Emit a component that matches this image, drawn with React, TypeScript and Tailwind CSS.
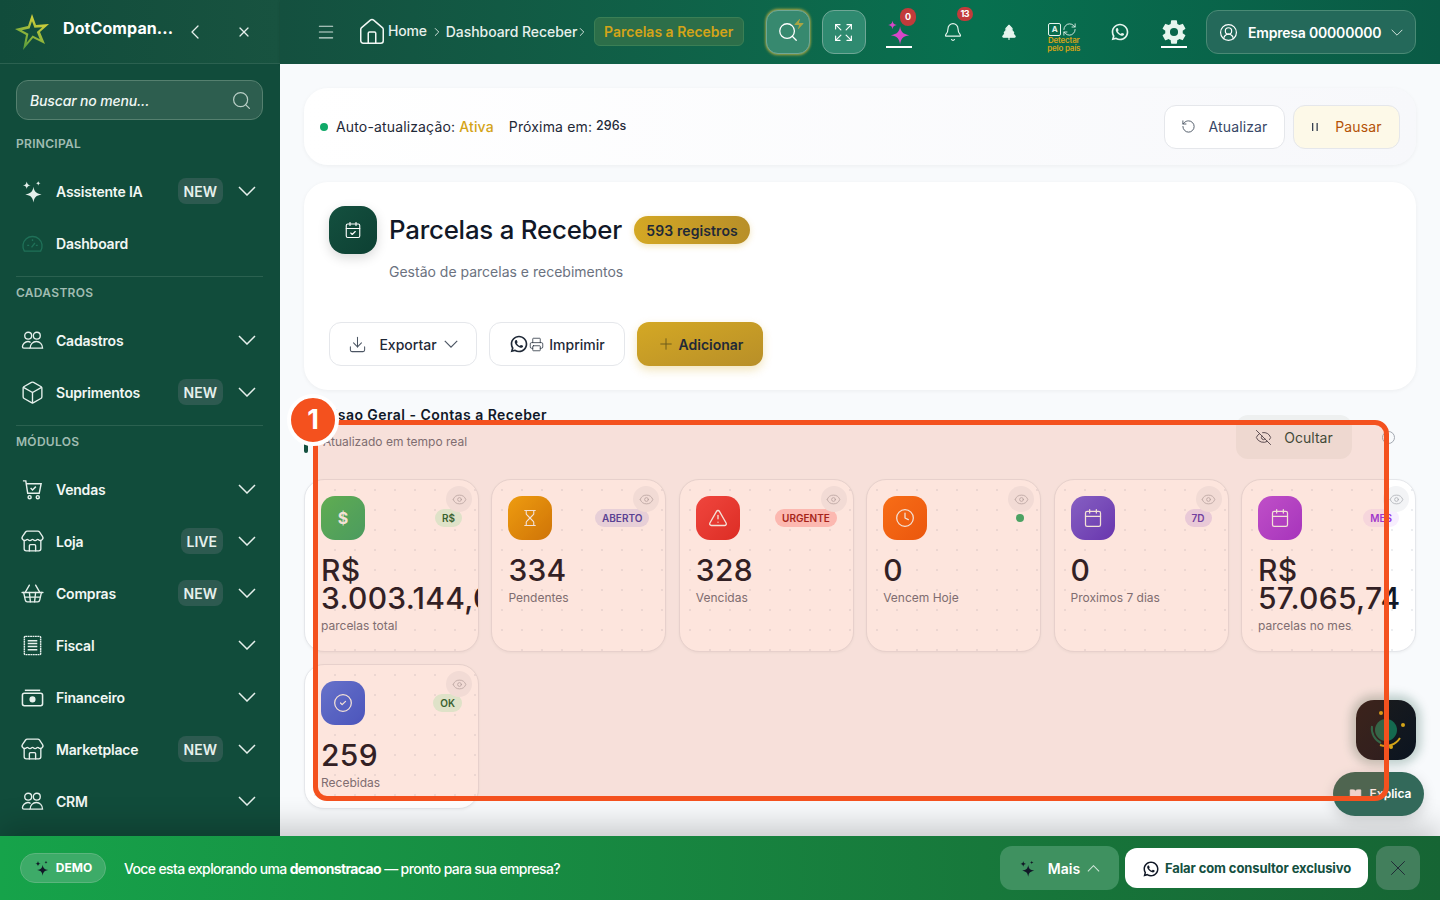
import {
  Bell,
  BookOpen,
  Box,
  Calendar,
  CalendarCheck,
  ChevronLeft,
  ChevronRight,
  CircleCheck,
  CircleUserRound,
  Clock,
  Download,
  Expand,
  Eye,
  EyeOff,
  Hourglass,
  House,
  Menu,
  Plus,
  Printer,
  RefreshCw,
  RotateCw,
  Search,
  ShoppingBasket,
  Store,
  TreePine,
  TriangleAlert,
  X,
  Zap,
} from 'lucide-react';
import { IoSettingsSharp } from 'react-icons/io5';
import { RiWhatsappLine } from 'react-icons/ri';
import { clsx } from 'clsx';
import type { ReactNode } from 'react';

function Chevron({ className, up }: { className?: string; up?: boolean }) {
  return (
    <svg viewBox="0 0 18 10" fill="none" stroke="currentColor" strokeWidth="1.5" className={clsx('shrink-0', className)}>
      <path d={up ? 'M1 9l8-8 8 8' : 'M1 1l8 8 8-8'} />
    </svg>
  );
}

function SparkleIcon({ className }: { className?: string }) {
  return (
    <svg viewBox="0 0 24 24" fill="currentColor" className={clsx('shrink-0', className)}>
      <path d="M13 7c.8 5 2.6 7 8.5 8-5.9 1-7.7 3-8.5 8.500-.8-5.500-2.600-7.500-8.500-8.500 5.900-1 7.700-3 8.500-8z" />
      <path d="M6 1.500c.4 2.600 1.300 3.600 4 4-2.700.4-3.600 1.400-4 4-.4-2.600-1.300-3.600-4-4 2.700-.4 3.600-1.400 4-4z" />
      <path d="M18 1c.3 1.500.8 2.100 2.500 2.500-1.700.4-2.200 1-2.500 2.500-.3-1.500-.8-2.100-2.500-2.500C17.200 3.100 17.700 2.500 18 1z" />
    </svg>
  );
}

function PeopleIcon({ className }: { className?: string }) {
  return (
    <svg viewBox="0 0 24 24" fill="none" stroke="currentColor" strokeWidth="1.4" className={clsx('shrink-0', className)}>
      <circle cx="7.500" cy="7" r="3.600" />
      <circle cx="16.500" cy="7" r="3.600" />
      <path d="M9.500 20h13c0-4-2.800-7-6.500-7s-6.500 3-6.500 7z" />
      <path d="M10 14c-.8-.6-1.600-1-2.700-1-3.200 0-5.800 3-5.800 5.500 0 1 .6 1.500 1.500 1.500h6.500" />
    </svg>
  );
}

function GaugeDome({ className }: { className?: string }) {
  return (
    <svg viewBox="0 0 24 24" fill="none" stroke="currentColor" strokeWidth="1.4" className={clsx('shrink-0', className)}>
      <path d="M3.500 20a10 10 0 1 1 17 0z" />
      <path d="M12 7.500v2M6.500 14h2M15.500 14h2M11 16l3.500-4.500" />
    </svg>
  );
}

function CartCheck({ className }: { className?: string }) {
  return (
    <svg viewBox="0 0 24 24" fill="none" stroke="currentColor" strokeWidth="1.5" className={clsx('shrink-0', className)}>
      <path d="M2 3h3l2 13h12l2-10H5.600" />
      <path d="M10 10.500l2 2 3.500-3.500" />
      <circle cx="9" cy="20" r="1.600" />
      <circle cx="17.500" cy="20" r="1.600" />
    </svg>
  );
}

function FiscalIcon({ className }: { className?: string }) {
  return (
    <svg viewBox="0 0 24 24" fill="none" stroke="currentColor" strokeWidth="1.5" className={clsx('shrink-0', className)}>
      <rect x="3.500" y="2.500" width="17" height="19" rx="1" strokeDasharray="2 0.500" />
      <path d="M7 7h10M7 10h10M7 13h10M7 16.500h10" />
    </svg>
  );
}

function MoneyIcon({ className }: { className?: string }) {
  return (
    <svg viewBox="0 0 24 24" fill="none" stroke="currentColor" strokeWidth="1.6" className={clsx('shrink-0', className)}>
      <path d="M4 4.500h16" />
      <rect x="1.500" y="7.500" width="21" height="13" rx="2" />
      <circle cx="12" cy="14" r="2.400" fill="currentColor" />
    </svg>
  );
}

function LogoStar() {
  return (
    <svg viewBox="0 0 36 36" className="w-[36px] h-[36px] shrink-0">
      <defs>
        <linearGradient id="logoStar" x1="0.8" y1="0" x2="0.2" y2="1">
          <stop offset="0" stopColor="#e8d93a" />
          <stop offset="1" stopColor="#4f9a3c" />
        </linearGradient>
      </defs>
      <path
        fillRule="evenodd"
        fill="url(#logoStar)"
        d="M17 0L21 11L34 10L25 18L30 30L18 24L8 36L11 21L0 15L13 12ZM17 7.200L14.600 14.400L6.800 16.200L13.400 19.800L11.600 28.800L17.600 21.600L24.800 25.200L21.800 18L27.200 13.200L19.400 13.800Z"
      />
    </svg>
  );
}

function MenuRow({
  icon,
  label,
  badge,
  chevron = true,
}: {
  icon: ReactNode;
  label: string;
  badge?: string;
  chevron?: boolean;
}) {
  return (
    <div className="h-[52px] flex items-center pl-[5px] pr-[7px] text-[#f1f7f4]">
      <span className="w-[22px] h-[22px] flex items-center justify-center shrink-0 text-[#e6f0ec]">{icon}</span>
      <span className="ml-[13px] text-[14px] font-semibold tracking-[-0.2px] flex-1">{label}</span>
      {badge && (
        <span className="h-[26px] px-[6px] flex items-center rounded-lg bg-[#2d5a50] text-[14px] font-semibold text-[#e6f0ec]">
          {badge}
        </span>
      )}
      {chevron && <Chevron className="w-[18px] h-[10px] ml-[15px] text-[#e6f0ec]" />}
    </div>
  );
}

function SectionLabel({ children, className }: { children: ReactNode; className: string }) {
  return <div className={clsx('text-[12px] leading-4 font-semibold tracking-[0.3px] text-[#a0bcb2]', className)}>{children}</div>;
}

function Sidebar() {
  const icon = 'w-[23px] h-[23px] shrink-0';
  return (
    <aside className="w-[280px] shrink-0 h-full bg-[#114c3b] overflow-hidden">
      <div className="h-[64px] flex items-center pl-[15px] pr-[28px] border-b border-[#2b6150] bg-gradient-to-r from-[#114c3b] to-[#185340]">
        <LogoStar />
        <span className="ml-[12px] -mt-[8px] text-[16px] font-bold tracking-[0.1px] text-white flex-1">DotCompan...</span>
        <ChevronLeft className="w-[24px] h-[24px] text-[#e6f0ec] mr-[29px]" strokeWidth={1.3} />
        <X className="w-[16px] h-[16px] text-[#e6f0ec]" strokeWidth={1.8} />
      </div>
      <div className="pl-[16px] pr-[17px] pt-[16px]">
        <div className="h-[40px] mb-[16px] flex items-center justify-between pl-[13px] pr-[10px] rounded-xl border border-[#55806f] bg-[#2d5e4f]">
          <span className="text-[14px] italic font-medium tracking-[-0.15px] text-[#f1f7f4]">Buscar no menu...</span>
          <Search className="w-[21px] h-[21px] text-[#b9cfc6]" strokeWidth={1.4} />
        </div>
        <SectionLabel className="mb-[13px]">PRINCIPAL</SectionLabel>
        <MenuRow icon={<SparkleIcon className={icon} />} label="Assistente IA" badge="NEW" />
        <MenuRow icon={<GaugeDome className={clsx(icon, 'text-[#1f7058]')} />} label="Dashboard" chevron={false} />
        <div className="mt-[7px] mb-[8px] h-px bg-[#2b6150]" />
        <SectionLabel className="mb-[13px]">CADASTROS</SectionLabel>
        <MenuRow icon={<PeopleIcon className={icon} />} label="Cadastros" />
        <MenuRow icon={<Box className="w-[25px] h-[25px] shrink-0" strokeWidth={1.3} />} label="Suprimentos" badge="NEW" />
        <div className="mt-[7px] mb-[8px] h-px bg-[#2b6150]" />
        <SectionLabel className="mb-[13px]">MÓDULOS</SectionLabel>
        <MenuRow icon={<CartCheck className={icon} />} label="Vendas" />
        <MenuRow icon={<Store className="w-[25px] h-[25px] shrink-0" strokeWidth={1.3} />} label="Loja" badge="LIVE" />
        <MenuRow icon={<ShoppingBasket className="w-[25px] h-[25px] shrink-0" strokeWidth={1.3} />} label="Compras" badge="NEW" />
        <MenuRow icon={<FiscalIcon className={icon} />} label="Fiscal" />
        <MenuRow icon={<MoneyIcon className={icon} />} label="Financeiro" />
        <MenuRow icon={<Store className="w-[25px] h-[25px] shrink-0" strokeWidth={1.3} />} label="Marketplace" badge="NEW" />
        <MenuRow icon={<PeopleIcon className={icon} />} label="CRM" />
      </div>
    </aside>
  );
}

function CountDot({ value, className }: { value: string; className: string }) {
  return (
    <span
      className={clsx(
        'absolute flex items-center justify-center rounded-full bg-[#c23b3b] text-white text-[9px] font-bold tracking-[-0.5px]',
        className,
      )}
    >
      {value}
    </span>
  );
}

function TopIcon({ children, underline, className }: { children: ReactNode; underline?: boolean; className?: string }) {
  return (
    <div className={clsx('relative shrink-0 w-[26px] h-[44px] flex items-center justify-center text-[#e6f5ee]', className)}>
      {children}
      {underline && <span className="absolute left-0 right-0 top-[36px] h-[2px] bg-white" />}
    </div>
  );
}

function Topbar() {
  return (
    <header className="h-[64px] shrink-0 flex items-center pl-[36px] bg-gradient-to-r from-[#14503f] via-[#07704f] via-60% to-[#0a5a45] shadow-sm">
      <Menu className="w-[20px] h-[20px] shrink-0 text-[#cfe0d9]" strokeWidth={1.3} />
      <House className="w-[30px] h-[30px] shrink-0 ml-[21px] text-[#f1f7f4]" strokeWidth={1.2} />
      <span className="ml-[1px] -mt-[4px] whitespace-nowrap text-[14px] font-medium tracking-[-0.2px] text-[#e6f0ec]">Home</span>
      <ChevronRight className="w-[14px] h-[14px] shrink-0 ml-[3px] text-[#e6f0ec]" strokeWidth={1.5} />
      <span className="ml-[2px] -mt-[2px] w-[132px] shrink-0 whitespace-nowrap text-[14px] font-medium tracking-[-0.05px] text-[#e6f0ec]">Dashboard Receber</span>
      <ChevronRight className="w-[14px] h-[14px] shrink-0 -ml-[3px] text-[#e6f0ec]" strokeWidth={1.5} />
      <span className="ml-[5px] h-[29px] w-[150px] shrink-0 -mt-[2px] flex items-center justify-center rounded-md border border-[#3b7f55] bg-[#2c6e49] text-[14px] font-semibold whitespace-nowrap text-[#d4a418]">
        Parcelas a Receber
      </span>
      <div className="ml-[22px] relative shrink-0 w-[44px] h-[44px] flex items-center justify-center rounded-xl border border-[#6fa796] bg-[#37896f] shadow-[0_-1px_3px_#a8a545,0_1px_3px_#a8a545]">
        <Search className="w-[22px] h-[22px] text-white" strokeWidth={1.4} />
        <Zap className="absolute top-[7px] right-[4px] w-[12px] h-[12px] text-[#a8a545]" fill="currentColor" strokeWidth={0} />
      </div>
      <div className="ml-[12px] shrink-0 w-[44px] h-[44px] flex items-center justify-center rounded-xl border border-[#6fa796] bg-[#2f8a70]">
        <Expand className="w-[21px] h-[21px] text-white" strokeWidth={1.3} />
      </div>
      <TopIcon underline className="ml-[20px]">
        <SparkleIcon className="w-[26px] h-[26px] text-[#d946c8]" />
        <CountDot value="0" className="left-[14px] top-[-2px] w-[16px] h-[18px]" />
      </TopIcon>
      <TopIcon className="ml-[28px]">
        <Bell className="w-[20px] h-[20px]" strokeWidth={1.4} />
        <CountDot value="13" className="left-[17px] top-[-3px] w-[16px] h-[14px]" />
      </TopIcon>
      <TopIcon className="ml-[30px]">
        <TreePine className="w-[18px] h-[18px]" fill="currentColor" strokeWidth={1.5} />
      </TopIcon>
      <div className="relative shrink-0 ml-[23px] w-[36px] h-[44px] flex items-center justify-center gap-[1px] text-[#e6f5ee]">
        <span className="-mt-[6px] w-[13px] h-[13px] flex items-center justify-center rounded-[2px] border border-current text-[8px] font-bold">A</span>
        <RefreshCw className="-mt-[6px] w-[15px] h-[15px] shrink-0" strokeWidth={1.4} />
        <span className="absolute left-[-2px] top-[26px] w-[42px] text-center text-[8px] leading-[8px] font-semibold tracking-[-0.2px] text-[#d4a418]">
          Detectar pelo país
        </span>
      </div>
      <TopIcon className="ml-[26px]">
        <RiWhatsappLine className="w-[20px] h-[20px]" />
      </TopIcon>
      <TopIcon underline className="ml-[28px]">
        <IoSettingsSharp className="w-[28px] h-[28px]" />
      </TopIcon>
      <div className="ml-auto mr-[24px] shrink-0 w-[210px] h-[44px] flex items-center justify-between px-[12px] rounded-xl border border-[#4a8a75] bg-[#24695a] text-white">
        <span className="flex items-center gap-[10px]">
          <CircleUserRound className="w-[19px] h-[19px]" strokeWidth={1.5} />
          <span className="text-[14px] font-semibold tracking-[-0.2px] whitespace-nowrap">Empresa 00000000</span>
        </span>
        <Chevron className="w-[12px] h-[7px] text-[#cfe0d9]" />
      </div>
    </header>
  );
}

const cards = [
  { icon: <span className="text-[16px] font-bold">$</span>, tone: 'from-[#46bd5b] to-[#2fa86b]', tag: 'R$', tagClass: 'bg-[#dcfce7] text-[#166534]', value: 'R$ 3.003.144,00', label: 'parcelas total' },
  { icon: <Hourglass className="w-[18px] h-[18px]" strokeWidth={1.5} />, tone: 'from-[#eeaa0e] to-[#c97a05]', tag: 'ABERTO', tagClass: 'bg-[#e6e6f8] text-[#3f3fa8]', value: '334', label: 'Pendentes' },
  { icon: <TriangleAlert className="w-[20px] h-[20px]" strokeWidth={1.6} />, tone: 'from-[#f04444] to-[#d92626]', tag: 'URGENTE', tagClass: 'bg-[#fecaca] text-[#991b1b]', value: '328', label: 'Vencidas' },
  { icon: <Clock className="w-[20px] h-[20px]" strokeWidth={1.5} />, tone: 'from-[#f97316] to-[#ea580c]', dot: true, value: '0', label: 'Vencem Hoje' },
  { icon: <Calendar className="w-[20px] h-[20px]" strokeWidth={1.5} />, tone: 'from-[#7462e0] to-[#5230c8]', tag: '7D', tagClass: 'bg-[#e8def8] text-[#5b3db5]', value: '0', label: 'Proximos 7 dias' },
  { icon: <Calendar className="w-[20px] h-[20px]" strokeWidth={1.5} />, tone: 'from-[#b74fe6] to-[#9a2fd8]', tag: 'MES', tagClass: 'bg-[#f7eefe] text-[#9333ea]', value: 'R$ 57.065,74', label: 'parcelas no mes' },
  { icon: <CircleCheck className="w-[20px] h-[20px]" strokeWidth={1.5} />, tone: 'from-[#4f78e8] to-[#2f55d8]', tag: 'OK', tagClass: 'bg-[#dcfce7] text-[#166534]', value: '259', label: 'Recebidas' },
];

function StatCard({ card }: { card: (typeof cards)[number] }) {
  return (
    <div className="relative overflow-hidden rounded-[20px] border border-[#e5e7eb] bg-white bg-[radial-gradient(circle,#eceef1_1px,transparent_1px)] bg-[size:20px_20px] p-[16px] shadow-[0_1px_3px_rgba(0,0,0,0.05)]">
      <span className="absolute top-[6px] right-[6px] w-[26px] h-[26px] flex items-center justify-center rounded-full bg-[#f3f4f6] text-[#a8abb2]">
        <Eye className="w-[15px] h-[15px]" strokeWidth={1.2} />
      </span>
      <div className="flex items-center justify-between">
        <span className={clsx('w-[44px] h-[44px] flex items-center justify-center rounded-[14px] bg-gradient-to-br text-[#f4fbf7]', card.tone)}>
          {card.icon}
        </span>
        {card.tag && (
          <span className={clsx('h-[18px] px-[7px] flex items-center rounded-full text-[10px] font-semibold', card.tagClass)}>{card.tag}</span>
        )}
        {card.dot && <span className="w-[8px] h-[8px] rounded-full bg-[#2fb170]" />}
      </div>
      <div className="mt-[16px] text-[30px] leading-[28px] font-medium tracking-[0.3px] text-[#111827]">{card.value}</div>
      <div className="mt-[5px] text-[12px] leading-[18px] text-[#6b7280]">{card.label}</div>
    </div>
  );
}

function Content() {
  return (
    <div className="flex-1 overflow-hidden px-[24px] pt-[24px] bg-[#f8fafc]">
      <div className="h-[77px] flex items-center justify-between pl-[16px] pr-[16px] rounded-3xl bg-gradient-to-r from-white to-[#f7f8fb] shadow-[0_1px_4px_rgba(0,0,0,0.05)] text-[14px] tracking-[0.15px] text-[#1f2937]">
        <div className="flex items-center">
          <span className="w-[8px] h-[8px] rounded-full bg-[#10a968]" />
          <span className="ml-[8px]">
            Auto-atualização: <span className="font-medium text-[#d4a418]">Ativa</span>
          </span>
          <span className="ml-[15px]">Próxima em:</span>
          <span className="ml-[4px] text-[12.500px] font-medium tracking-[0px]">296s</span>
        </div>
        <div className="flex items-center gap-[8px]">
          <button className="w-[121px] h-[44px] flex items-center justify-center gap-[12px] rounded-xl border border-[#e5e7eb] bg-white text-[#374766]">
            <RotateCw className="w-[15px] h-[15px] -scale-x-100 text-[#4b5563]" strokeWidth={1.5} />
            Atualizar
          </button>
          <button className="w-[107px] h-[44px] flex items-center justify-center gap-[16px] rounded-xl border border-[#e5e7eb] bg-[#fdf9e8] text-[#b45309]">
            <svg viewBox="0 0 8 10" className="w-[8px] h-[10px] text-[#374151]" fill="currentColor">
              <rect x="1" y="1" width="1.300" height="8" />
              <rect x="5.500" y="1" width="1.300" height="8" />
            </svg>
            Pausar
          </button>
        </div>
      </div>

      <div className="mt-[17px] h-[208px] rounded-3xl bg-white pt-[24px] pl-[25px] shadow-[0_1px_4px_rgba(0,0,0,0.05)]">
        <div className="flex">
          <span className="w-[48px] h-[48px] flex items-center justify-center rounded-2xl bg-gradient-to-br from-[#14503f] to-[#0d4033] text-white shadow-[0_4px_12px_rgba(0,0,0,0.15)]">
            <CalendarCheck className="w-[18px] h-[18px]" strokeWidth={1.5} />
          </span>
          <div className="ml-[12px]">
            <div className="flex items-center h-[48px]">
              <span className="text-[25.800px] font-medium tracking-[-0.2px] text-[#111827] mt-[1px]">Parcelas a Receber</span>
              <span className="ml-[12px] w-[116px] h-[28px] flex items-center justify-center rounded-full bg-gradient-to-r from-[#d4a824] to-[#b88f28] text-[14px] font-semibold tracking-[0.1px] text-[#1f2937] shadow-[0_2px_6px_rgba(212,168,36,0.3)]">
                593 registros
              </span>
            </div>
            <div className="mt-[8px] text-[14px] leading-5 text-[#6b7280]">Gestão de parcelas e recebimentos</div>
          </div>
        </div>
        <div className="mt-[40px] flex gap-[12px] text-[14px] font-medium text-[#1f2937]">
          <button className="w-[148px] h-[44px] flex items-center justify-center gap-[12px] rounded-xl border border-[#e5e7eb] bg-white">
            <Download className="w-[19px] h-[19px] text-[#4b5563]" strokeWidth={1.3} />
            Exportar
            <Chevron className="w-[14px] h-[8px] -ml-[5px] text-[#4b5563]" />
          </button>
          <button className="w-[136px] h-[44px] flex items-center justify-center rounded-xl border border-[#e5e7eb] bg-white">
            <RiWhatsappLine className="w-[20px] h-[20px]" />
            <Printer className="w-[15px] h-[15px]" strokeWidth={1.2} />
            <span className="ml-[5px]">Imprimir</span>
          </button>
          <button className="w-[126px] h-[44px] flex items-center justify-center gap-[4px] rounded-xl bg-gradient-to-br from-[#d4a824] to-[#b88f28] font-semibold text-[#1f2937] shadow-[0_4px_10px_rgba(212,168,36,0.3)]">
            <Plus className="w-[18px] h-[18px] text-[#6b5a1c]" strokeWidth={1.3} />
            Adicionar
          </button>
        </div>
      </div>

      <div className="mt-[15px] h-[74px] flex justify-between">
        <div className="flex">
          <span className="w-[4px] h-[48px] rounded-full bg-[#14503f]" />
          <div className="ml-[15px]">
            <div className="text-[14px] leading-5 font-semibold tracking-[0.45px] text-[#111827]">Visao Geral - Contas a Receber</div>
            <div className="mt-[8px] text-[12px] leading-[18px] text-[#6b7280]">Atualizado em tempo real</div>
          </div>
        </div>
        <div className="flex items-start pt-[10px]">
          <button className="w-[116px] h-[44px] flex items-center justify-center gap-[12px] rounded-xl bg-[#eef0f0] text-[14px] text-[#1f4a3f]">
            <EyeOff className="w-[17px] h-[17px] text-[#374151]" strokeWidth={1.3} />
            Ocultar
          </button>
          <span className="ml-[30px] mr-[21px] mt-[16px] w-[13px] h-[13px] rounded-full border border-[#a3a8b0]" />
        </div>
      </div>

      <div className="grid grid-cols-6 gap-x-[12.400px] gap-y-[12px]">
        {cards.map((card) => (
          <StatCard key={card.label} card={card} />
        ))}
      </div>
    </div>
  );
}

function DemoBanner() {
  return (
    <footer className="h-[64px] shrink-0 relative flex items-center pl-[20px] pr-[20px] bg-gradient-to-r from-[#16a34a] to-[#166534] shadow-[0_-10px_30px_rgba(0,0,0,0.2)] text-white">
      <span className="w-[86px] h-[30px] flex items-center justify-center gap-[6px] rounded-full border border-[#5bb57d] bg-[#3dab68] text-[12px] font-bold">
        <SparkleIcon className="w-[16px] h-[16px] text-[#111827]" />
        DEMO
      </span>
      <span className="ml-[18px] flex-1 text-[14px] font-medium tracking-[-0.63px]">
        Voce esta explorando uma <strong className="font-bold">demonstracao</strong> — pronto para sua empresa?
      </span>
      <button className="w-[119px] h-[44px] flex items-center justify-center rounded-xl bg-[#3f9160] text-[14px] font-semibold">
        <SparkleIcon className="w-[17px] h-[17px] text-[#111827]" />
        <span className="ml-[12px]">Mais</span>
        <Chevron up className="w-[13px] h-[7px] ml-[7px] text-[#d1e7da]" />
      </button>
      <button className="ml-[6px] w-[243px] h-[40px] pt-[2px] flex items-center justify-center gap-[5px] rounded-xl bg-white text-[13px] font-bold tracking-[-0.1px] text-[#14503f]">
        <RiWhatsappLine className="w-[18px] h-[18px] text-[#111827]" />
        Falar com consultor exclusivo
      </button>
      <button className="ml-[8px] w-[44px] h-[44px] flex items-center justify-center rounded-xl bg-[#427f5c]">
        <X className="w-[26px] h-[26px] text-[#1f2937]" strokeWidth={0.9} />
      </button>
    </footer>
  );
}

function FloatingButtons() {
  return (
    <>
      <div className="absolute left-[1356px] top-[700px] w-[60px] h-[60px] rounded-[18px] bg-gradient-to-br from-[#1c1c1c] to-[#0b1420] shadow-[0_0_10px_5px_rgba(20,80,63,0.25)]">
        <svg viewBox="0 0 60 60" className="w-full h-full" fill="none">
          <circle cx="30" cy="30" r="11" fill="#14694f" />
          <path d="M16 26a16 16 0 0 0 9 17" stroke="#14694f" strokeWidth="2" />
          <path d="M24 45a17 17 0 0 0 20-7" stroke="#d4a418" strokeWidth="2" />
          <circle cx="25" cy="13" r="2" fill="#d4a418" />
          <circle cx="47" cy="25" r="2" fill="#d4a418" />
          <circle cx="35" cy="47" r="2" fill="#d4a418" />
        </svg>
      </div>
      <div className="absolute left-[1333px] top-[772px] w-[91px] h-[44px] flex items-center justify-center gap-[8px] pl-[3px] rounded-full bg-[#33695a] text-[12px] font-semibold text-white shadow-[0_4px_14px_rgba(0,0,0,0.15)]">
        <BookOpen className="w-[13px] h-[13px] text-[#f1e8ea]" fill="currentColor" strokeWidth={1} />
        Explica
      </div>
    </>
  );
}

function TourHighlight() {
  return (
    <>
      <div className="absolute left-[313px] top-[420px] w-[1076px] h-[381px] rounded-[14px] border-[5px] border-[#f4511e] bg-[#f4511e]/15" />
      <div className="absolute left-[287px] top-[394px] w-[52px] h-[52px] flex items-center justify-center rounded-full border-[4px] border-white bg-[#f4511e] text-[27px] font-bold text-white">
        1
      </div>
    </>
  );
}

export default function App() {
  return (
    <div className="relative w-[1440px] h-[900px] flex flex-col overflow-hidden font-[family-name:Inter,sans-serif]">
      <div className="h-[836px] flex">
        <Sidebar />
        <main className="flex-1 min-w-0 flex flex-col">
          <Topbar />
          <Content />
        </main>
      </div>
      <DemoBanner />
      <FloatingButtons />
      <TourHighlight />
    </div>
  );
}
